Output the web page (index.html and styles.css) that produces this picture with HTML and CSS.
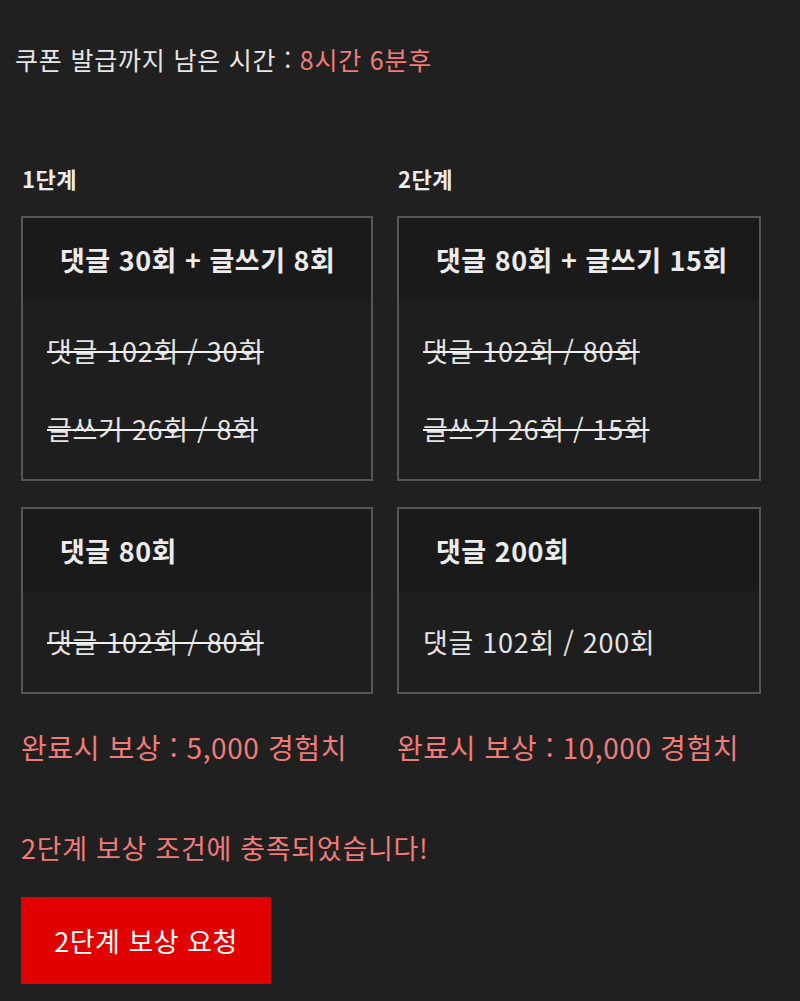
FILE: index.html
```html
<!DOCTYPE html>
<html lang="ko">
<head>
<meta charset="utf-8">
<link rel="stylesheet" href="styles.css">
</head>
<body>
<div class="page">
  <p class="timer">쿠폰 발급까지 남은 시간 : <span class="accent">8시간 6분후</span></p>
  <div class="stages">
    <div class="stage stage-1">
      <h3 class="stage-label">1단계</h3>
      <div class="card">
        <div class="card-head">댓글 30회 + 글쓰기 8회</div>
        <div class="card-body">
          <div class="line done">댓글 102회 / 30회</div>
          <div class="line done">글쓰기 26회 / 8회</div>
        </div>
      </div>
      <div class="card">
        <div class="card-head">댓글 80회</div>
        <div class="card-body">
          <div class="line done">댓글 102회 / 80회</div>
        </div>
      </div>
      <p class="reward">완료시 보상 : 5,000 경험치</p>
    </div>
    <div class="stage stage-2">
      <h3 class="stage-label">2단계</h3>
      <div class="card">
        <div class="card-head">댓글 80회 + 글쓰기 15회</div>
        <div class="card-body">
          <div class="line done">댓글 102회 / 80회</div>
          <div class="line done">글쓰기 26회 / 15회</div>
        </div>
      </div>
      <div class="card">
        <div class="card-head">댓글 200회</div>
        <div class="card-body">
          <div class="line">댓글 102회 / 200회</div>
        </div>
      </div>
      <p class="reward">완료시 보상 : 10,000 경험치</p>
    </div>
  </div>
  <p class="notice">2단계 보상 조건에 충족되었습니다!</p>
  <button class="claim" type="button">2단계 보상 요청</button>
</div>
</body>
</html>
```

FILE: styles.css
```css
html, body {
  margin: 0;
  padding: 0;
  background: #202020;
}
body {
  font-family: "Noto Sans CJK KR", "Noto Sans", sans-serif;
  color: #e8e8e8;
  height: 1001px;
  overflow: hidden;
}
.page {
  padding-top: 41px;
}
.timer {
  margin: 0;
  padding-left: 15px;
  font-size: 25px;
  line-height: 36px;
  letter-spacing: 0.8px;
  color: #e6e6e6;
}
.accent {
  color: #f07b78;
}
.stages {
  display: grid;
  grid-template-columns: 352px 364px;
  column-gap: 24px;
  padding-left: 21px;
  margin-top: 86px;
}
.stage {
  display: flex;
  flex-direction: column;
}
.stage-label {
  margin: 0 0 23px 0;
  padding-left: 1px;
  font-size: 22px;
  line-height: 30px;
  font-weight: 700;
  letter-spacing: 0.5px;
  color: #ececec;
}
.card {
  border: 2px solid #565656;
  background: #1e1e1e;
  margin-bottom: 26px;
}
.card + .card {
  margin-bottom: 0;
}
.card-head {
  height: 82px;
  display: flex;
  align-items: center;
  padding-left: 37px;
  background: #1a1a1a;
  font-size: 27px;
  font-weight: 700;
  letter-spacing: 0.5px;
  color: #ececec;
  white-space: nowrap;
}
.card-body {
  padding: 25px 24px 24px 24px;
  display: flex;
  flex-direction: column;
  gap: 26px;
}
.line {
  font-size: 27px;
  line-height: 52px;
  letter-spacing: 0.7px;
  color: #e4e4e4;
  white-space: nowrap;
}
.line.done {
  text-decoration: line-through;
  text-decoration-thickness: 2px;
  text-decoration-color: #f0f0f0;
}
.reward {
  margin: 33px 0 0 0;
  font-size: 28px;
  line-height: 40px;
  letter-spacing: 0.6px;
  color: #f07b78;
  white-space: nowrap;
}
.notice {
  margin: 61px 0 0 0;
  padding-left: 21px;
  font-size: 27px;
  line-height: 40px;
  letter-spacing: 0.7px;
  color: #f07b78;
}
.claim {
  display: flex;
  align-items: center;
  justify-content: center;
  margin: 29px 0 0 21px;
  width: 250px;
  height: 87px;
  border: none;
  border-radius: 0;
  background: #e10000;
  color: #ffffff;
  font-family: inherit;
  font-size: 27px;
  letter-spacing: 0.5px;
  padding: 0;
}
```
